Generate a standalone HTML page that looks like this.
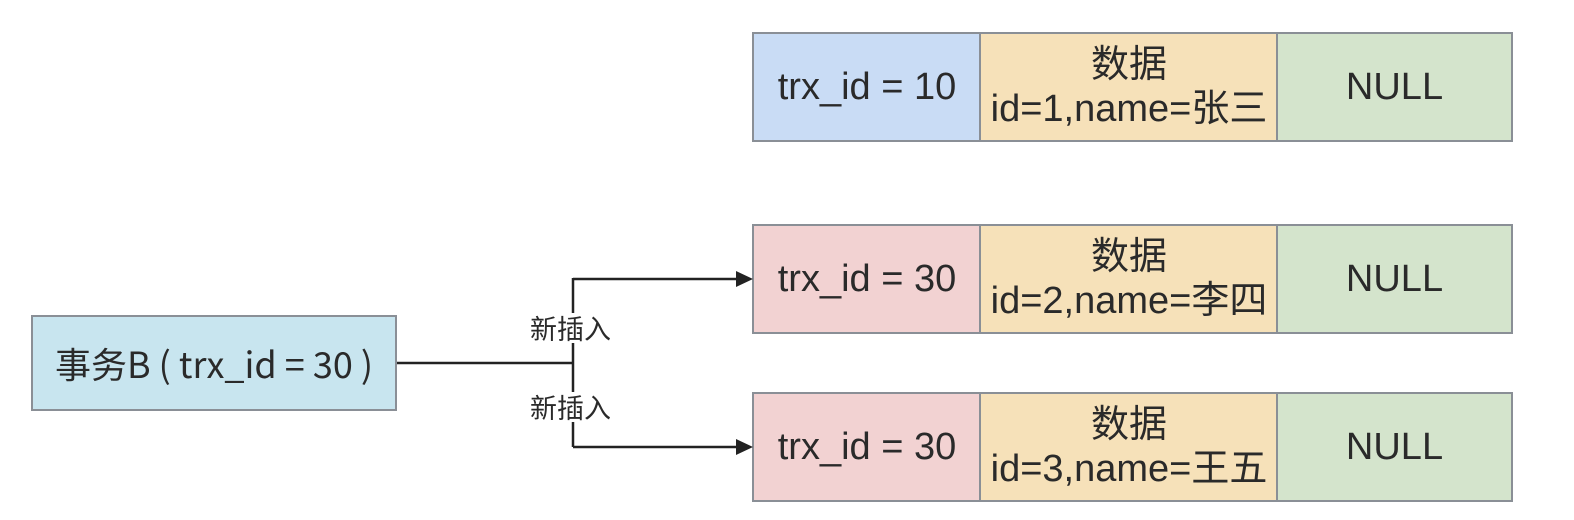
<!DOCTYPE html>
<html><head><meta charset="utf-8"><style>
body{margin:0;width:1574px;height:520px;background:#fff;position:relative;overflow:hidden;font-family:"Liberation Sans","Noto Sans CJK SC",sans-serif;color:#2a2a2a}
.b{position:absolute;box-sizing:border-box;border:2px solid #8a8f96;display:flex;align-items:center;justify-content:center;text-align:center;font-size:38px;line-height:44px;white-space:nowrap}
.l{position:absolute;font-size:27px;background:#fff;line-height:30px;font-family:"Noto Sans CJK SC",sans-serif}
</style></head><body>
<div class="b" style="left:752px;top:32px;width:230px;height:110px;background:#c9dcf5">trx_id = 10</div>
<div class="b" style="left:979px;top:32px;width:300px;height:110px;background:#f6e1b9">数据<br>id=1,name=张三</div>
<div class="b" style="left:1276px;top:32px;width:237px;height:110px;background:#d4e4cc">NULL</div>

<div class="b" style="left:752px;top:224px;width:230px;height:110px;background:#f2d2d2">trx_id = 30</div>
<div class="b" style="left:979px;top:224px;width:300px;height:110px;background:#f6e1b9">数据<br>id=2,name=李四</div>
<div class="b" style="left:1276px;top:224px;width:237px;height:110px;background:#d4e4cc">NULL</div>

<div class="b" style="left:752px;top:392px;width:230px;height:110px;background:#f2d2d2">trx_id = 30</div>
<div class="b" style="left:979px;top:392px;width:300px;height:110px;background:#f6e1b9">数据<br>id=3,name=王五</div>
<div class="b" style="left:1276px;top:392px;width:237px;height:110px;background:#d4e4cc">NULL</div>

<div class="b" style="left:31px;top:315px;width:366px;height:96px;background:#c8e5ef;font-family:'Noto Sans CJK SC',sans-serif;font-size:36px">事务B ( trx_id = 30 )</div>

<svg style="position:absolute;left:0;top:0" width="1574" height="520">
<g stroke="#222" stroke-width="2.5" fill="none">
<path d="M397 363H573M573 278V447M573 279H738M573 447H738"/>
</g>
<path d="M736 271L753 279L736 287Z" fill="#222"/>
<path d="M736 439L753 447L736 455Z" fill="#222"/>
</svg>
<div class="l" style="left:530px;top:313px">新插入</div>
<div class="l" style="left:530px;top:392px">新插入</div>
</body></html>
